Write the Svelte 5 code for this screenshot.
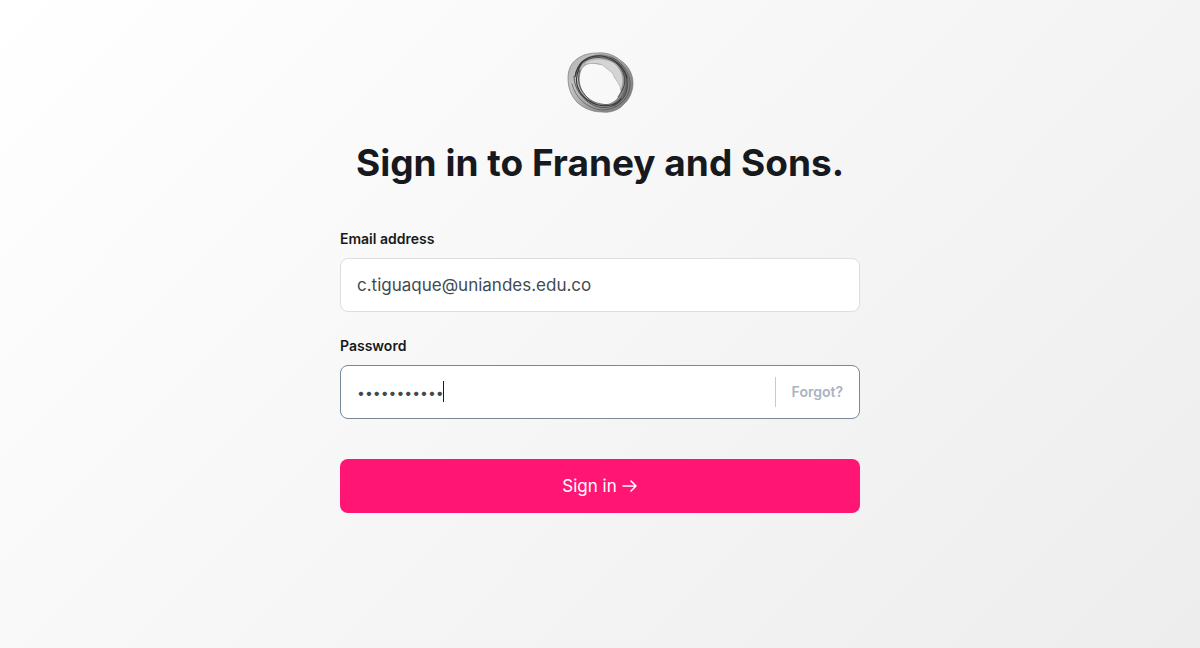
<script>
  let email = $state('c.tiguaque@uniandes.edu.co');
  let password = $state('elevenchars');
</script>

<main>
  <svg class="logo" viewBox="0 0 80 76" aria-hidden="true">
    <defs>
      <linearGradient id="ring" x1="0" y1="0" x2="1" y2="0.6">
        <stop offset="0" stop-color="#b0b0b0" />
        <stop offset="0.3" stop-color="#c2c2c2" />
        <stop offset="0.6" stop-color="#a4a4a4" />
        <stop offset="1" stop-color="#828282" />
      </linearGradient>
    </defs>
    <path fill="url(#ring)" fill-rule="evenodd" stroke="#6c6c6c" stroke-width=".6" d="M37 9C46 8 54 11 60 16C68 21 73 30 73 39C73 48 69 56 63 61C58 67 48 69 42 68C31 68 21 63 16 57C10 50 8 42 8 34C8 23 13 17 20 13C25 10 31 9 37 9ZM38 20C29 17 22 21 20 29C18 37 20 45 25 51C29 57 37 61 45 61C53 60 59 55 61 48C62 42 58 32 54 27C50 21 45 20 38 20Z" />
    <path fill="#d4d4d4" stroke="#999" stroke-width=".5" d="M24 20C31 13 48 14 55 20C62 26 65 36 61 46C60 41 57 37 54 33C53 27 48 27 44 22C38 18 30 20 24 20Z" />
    <g fill="none" stroke="#333" stroke-linecap="round">
      <path stroke-width="3" stroke-opacity=".35" d="M17 29C20 16 31 11 44 12C56 14 66 24 67 37C67 48 61 57 54 61" />
      <path stroke-width="1.1" d="M15 33C17 18 28 11 42 12C55 14 64 23 67 34" />
      <path stroke-width="1.1" d="M22 18C18 25 15 32 17 41C20 51 28 58 38 61C47 63 56 61 61 55" />
      <path stroke-width=".8" d="M20 20C31 11 46 12 56 19C64 26 67 36 63 45C61 49 59 51 58 53" />
      <path stroke-width=".7" d="M20 26C16 37 20 47 28 54C35 60 42 60 48 61" />
      <path stroke-width=".7" d="M14 32C14 45 22 55 33 61C45 67 58 62 64 53C69 45 67 37 66 31" />
      <path stroke-width=".5" d="M12 40C15 53 27 65 42 66C57 66 70 55 70 40C70 28 62 18 51 13" />
    </g>
  </svg>

  <h1>Sign in to Franey and Sons.</h1>

  <form onsubmit={(event) => event.preventDefault()}>
    <div class="field">
      <label for="email">Email address</label>
      <div class="box">
        <input id="email" type="email" bind:value={email} />
      </div>
    </div>
    <div class="field">
      <label for="password">Password</label>
      <div class="box active">
        <div class="entry">
          <input id="password" type="password" bind:value={password} />
          <span class="caret" aria-hidden="true"></span>
        </div>
        <a href="#forgot">Forgot?</a>
      </div>
    </div>
    <button type="submit">
      Sign in
      <svg class="arrow" viewBox="0 0 16 16" aria-hidden="true">
        <path d="M1 8H13.5M9 3L14 8L9 13" />
      </svg>
    </button>
  </form>
</main>

<style>
  :global(body) {
    margin: 0;
  }

  main {
    box-sizing: border-box;
    min-height: 100vh;
    padding: 44px 24px;
    display: flex;
    flex-direction: column;
    align-items: center;
    background: linear-gradient(135deg, #fff, #ededed);
    font-family: Inter, "Liberation Sans", sans-serif;
    color: #16191d;
  }

  .logo {
    width: 80px;
    height: 76px;
  }

  h1 {
    margin: 18px 0 0;
    font-size: 37px;
    line-height: 50px;
    font-weight: 700;
    text-align: center;
  }

  form {
    width: 100%;
    max-width: 520px;
    margin-top: 40px;
    display: flex;
    flex-direction: column;
    gap: 23px;
  }

  .field {
    display: flex;
    flex-direction: column;
    gap: 9px;
  }

  label {
    font-size: 14px;
    line-height: 21px;
    font-weight: 600;
  }

  .box {
    box-sizing: border-box;
    height: 54px;
    padding: 0 16px;
    display: flex;
    align-items: center;
    background: #fff;
    border: 1px solid #dcdee0;
    border-radius: 8px;
  }

  .active {
    border-color: #778899;
  }

  .entry {
    position: relative;
    flex: 1;
    display: flex;
  }

  input {
    width: 100%;
    min-width: 0;
    height: 28px;
    padding: 0;
    border: 0;
    outline: 0;
    background: none;
    font-family: inherit;
    font-size: 17px;
    color: #414a53;
  }

  input[type="password"] {
    font-size: 14px;
  }

  .caret {
    position: absolute;
    left: 86px;
    top: 3px;
    width: 1px;
    height: 21px;
    background: #16191d;
  }

  a {
    padding-left: 16px;
    border-left: 1px solid #c5cbd2;
    font-size: 14px;
    line-height: 30px;
    font-weight: 600;
    color: #a9b4bf;
    text-decoration: none;
  }

  button {
    height: 54px;
    margin-top: 17px;
    display: flex;
    align-items: center;
    justify-content: center;
    gap: 5px;
    border: 0;
    border-radius: 8px;
    background: #ff1675;
    color: #fff;
    font-family: inherit;
    font-size: 17px;
    cursor: pointer;
  }

  .arrow {
    width: 16px;
    height: 16px;
    fill: none;
    stroke: #fff;
    stroke-width: 1.5;
    stroke-linecap: round;
    stroke-linejoin: round;
  }
</style>
